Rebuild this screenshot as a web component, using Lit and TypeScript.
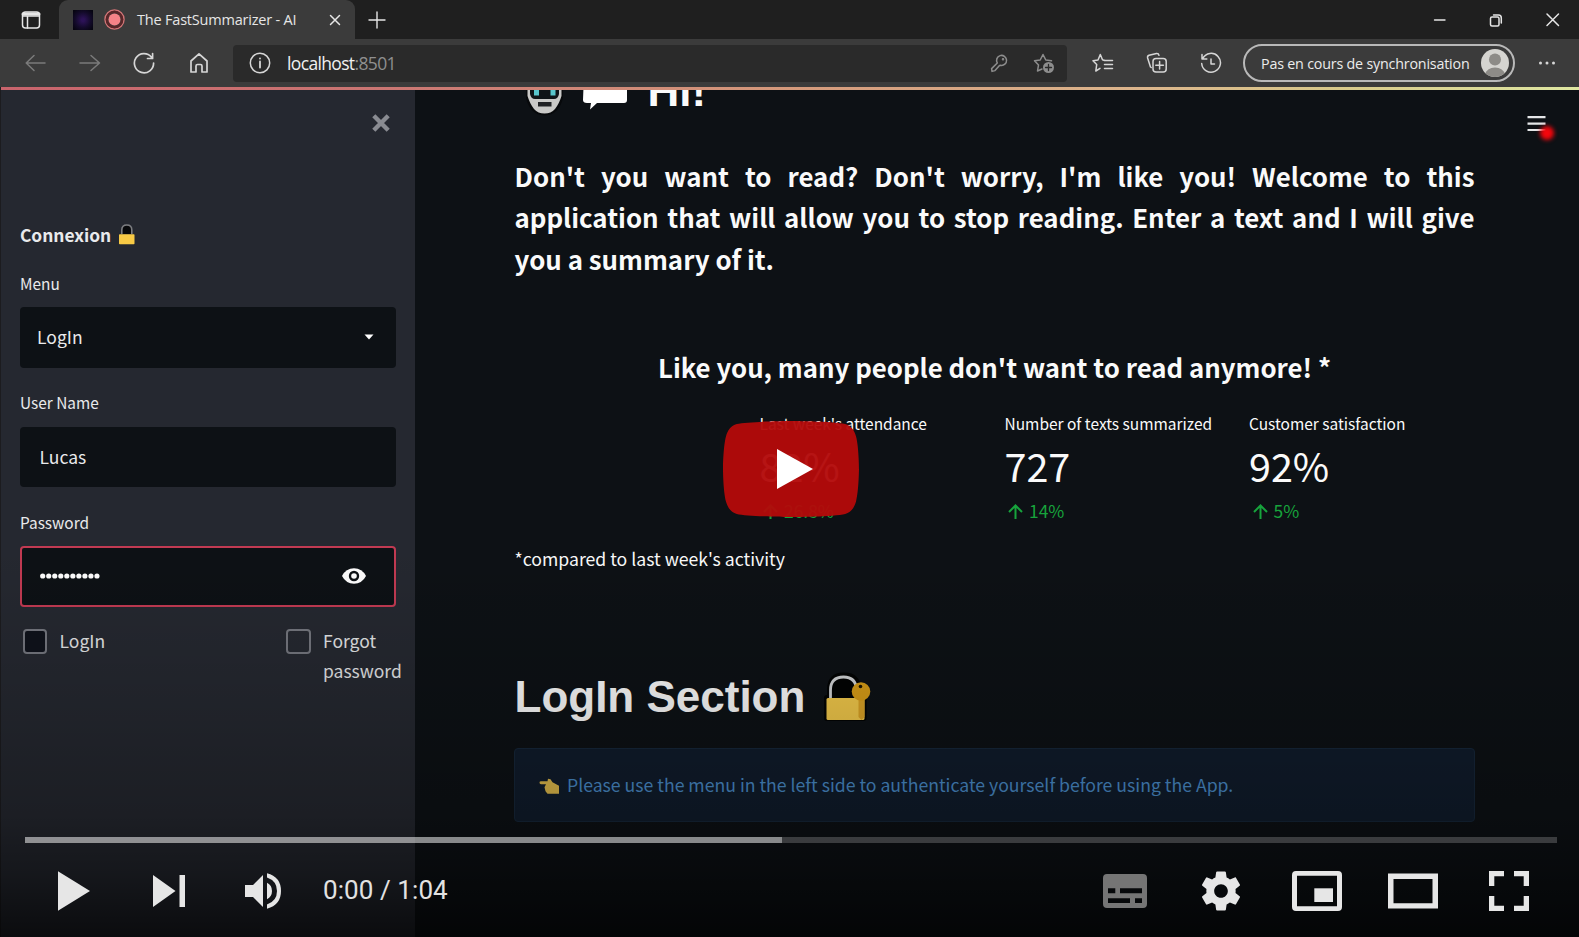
import { LitElement, html, css, svg } from "lit";
import { customElement } from "lit/decorators.js";

const metrics = [
  { label: "Last week's attendance", value: "82%", delta: "26.8%" },
  { label: "Number of texts summarized", value: "727", delta: "14%" },
  { label: "Customer satisfaction", value: "92%", delta: "5%" },
];

const icon = (w: number, h: number, body: unknown, cls = "") =>
  html`<svg class="ico ${cls}" width=${w} height=${h} viewBox="0 0 ${w} ${h}" fill="none" stroke="currentColor" stroke-width="1.5" stroke-linecap="round" stroke-linejoin="round">${body}</svg>`;

@customElement("browser-chrome")
class BrowserChrome extends LitElement {
  static styles = css`
    :host { display: block; font-family: "Open Sans", "Noto Sans", sans-serif; color: #e6e6e6; }
    .ico { display: block; flex: none; }
    .strip { display: flex; height: 39px; background: #1f1f1f; }
    .side { width: 59px; display: flex; align-items: center; justify-content: center; padding-left: 2px; box-sizing: border-box; }
    .tab { width: 296px; box-sizing: border-box; display: flex; align-items: center; padding-left: 14px; background: #3b3b3b; border-radius: 9px 9px 0 0; }
    .fav { width: 20px; height: 20px; background: radial-gradient(circle, #2c1257 10%, #130a2a 55%, #060410 90%); }
    .rec { margin-left: 11px; }
    .title { margin-left: 12px; font-size: 14.5px; letter-spacing: -0.2px; width: 192px; white-space: nowrap; }
    .plus { margin: 11px 0 0 13px; }
    .win { margin-left: auto; display: flex; align-items: center; gap: 42px; padding-right: 19px; }
    .bar { display: flex; height: 48px; background: #3b3b3b; align-items: center; color: #d6d6d6; }
    .nav { display: flex; width: 233px; box-sizing: border-box; padding-left: 24px; gap: 32.5px; align-items: center; }
    .off { color: #7b7b7b; }
    .addr { width: 834px; height: 37px; box-sizing: border-box; background: #2a2a2a; border-radius: 4px; display: flex; align-items: center; padding: 0 12px 0 16px; }
    .url { margin-left: 16px; font-size: 17.5px; letter-spacing: -0.65px; flex: 1; color: #f0f0f0; }
    .port { color: #8f8f8f; }
    .dim { color: #8d8d8d; }
    .key { margin-right: 25px; }
    .tools { display: flex; padding-left: 25px; gap: 32px; }
    .pill { margin-left: 21px; width: 272px; height: 38px; box-sizing: border-box; border: 2px solid #b9b9b9; border-radius: 19px; display: flex; align-items: center; justify-content: space-between; padding: 0 4px 0 16px; font-size: 14.3px; letter-spacing: -0.2px; white-space: nowrap; color: #ececec; }
    .more { margin-left: 22px; }
    .line { height: 3px; margin-left: 1px; background: linear-gradient(90deg, #c9646c 0%, #cb7773 25%, #d59a7c 50%, #dcb58c 72%, #d8c98a 85%, #dfe7a2 100%); }
  `;

  render() {
    return html`
      <div class="strip">
        <div class="side">${icon(20, 20, svg`<rect x="1.5" y="2" width="17" height="16" rx="3"/><path d="M2 4 H18" stroke-width="3"/><path d="M2 6 H18 M6.5 6 V18"/>`)}</div>
        <div class="tab">
          <div class="fav"></div>
          ${icon(21, 21, svg`<circle cx="10.5" cy="10.5" r="9.5" stroke="#d27476"/><circle cx="10.5" cy="10.5" r="7.7" stroke="#5a2528" stroke-width="2.4"/><circle cx="10.5" cy="10.5" r="6" fill="#f58287" stroke="none"/>`, "rec")}
          <span class="title">The FastSummarizer - AI</span>
          ${icon(12, 12, svg`<path d="M1.5 1.5 L10.5 10.5 M10.5 1.5 L1.5 10.5"/>`)}
        </div>
        ${icon(18, 18, svg`<path d="M9 1 V17 M1 9 H17" stroke-width="1.4"/>`, "plus")}
        <div class="win">
          ${icon(14, 14, svg`<path d="M1.5 7 H12" stroke-width="1.4"/>`)}
          ${icon(14, 14, svg`<rect x="1.5" y="4" width="8.5" height="9" rx="1.5"/><path d="M4.5 2 H9.5 Q12.3 2 12.3 5 V10"/>`)}
          ${icon(15, 15, svg`<path d="M2 2 L13.5 13.5 M13.5 2 L2 13.5"/>`)}
        </div>
      </div>
      <div class="bar">
        <div class="nav">
          ${icon(22, 20, svg`<path d="M10 2.5 L2.2 10 L10 17.5 M2.2 10 H21"/>`, "off")}
          ${icon(22, 20, svg`<path d="M12 2.5 L20.5 10 L12 17.5 M20.5 10 H1"/>`, "off")}
          ${icon(22, 22, svg`<path d="M18.5 5.2 A9.6 9.6 0 1 0 20.6 11 M19.6 1.5 V6.5 H14.5" stroke-width="1.7"/>`)}
          ${icon(22, 22, svg`<path d="M3 9 L11 1.8 L19 9 V20 H14 V14 Q14 12.5 12.5 12.5 H9.5 Q8 12.5 8 14 V20 H3 Z" stroke-width="1.7"/>`)}
        </div>
        <div class="addr">
          ${icon(22, 22, svg`<circle cx="11" cy="11" r="9.7"/><path d="M11 9.5 V15.5 M11 6.4 V6.6" stroke-width="1.8"/>`)}
          <span class="url">localhost<span class="port">:8501</span></span>
          ${icon(18, 20, svg`<path d="M7.3 10 A5 5 0 1 1 10.6 12.3 L9.5 12.4 L5 17.6 L2 18.4 L1.6 15.6 Z"/><circle cx="13" cy="6.3" r="0.5"/>`, "dim key")}
          ${icon(22, 22, svg`<path d="M9 17 L4.5 19 L5.5 13 L1.5 8.8 L7.2 8 L10 2.5 L12.8 8 L18.5 8.8"/><circle cx="15.5" cy="15.5" r="5.5" fill="currentColor" stroke="none"/><path d="M15.5 12.5 V18.5 M12.5 15.5 H18.5" stroke="#2a2a2a" stroke-width="1.3"/>`, "dim")}
        </div>
        <div class="tools">
          ${icon(22, 22, svg`<path d="M12.5 8.5 L10.5 7.8 L8.3 2.5 L6 8 L1 8.8 L4.7 12.6 L3.8 19 L8 16.3 M12.8 8.5 H20.5 M12.5 12.5 H20.5 M12.5 16.5 H20.5"/>`)}
          ${icon(22, 22, svg`<rect x="7" y="6.5" width="13.2" height="13.5" rx="3"/><path d="M13.6 9.5 V17 M9.8 13.2 H17.4 M5.2 15.5 L4.5 15 L1.6 6 Q1.2 4 3 3.3 L10.5 1.6 Q12.6 1.4 13 3.3"/>`)}
          ${icon(22, 22, svg`<path d="M2.8 6.3 A9.4 9.4 0 1 1 1.7 11.5 M2 2.5 V7 H6.8 M11 7 V12 H14.5"/>`)}
        </div>
        <div class="pill">
          <span>Pas en cours de synchronisation</span>
          <svg class="ico" width="28" height="28" viewBox="0 0 28 28"><defs><clipPath id="av"><circle cx="14" cy="14" r="14"/></clipPath></defs><g clip-path="url(#av)"><rect width="28" height="28" fill="#d5d4d0"/><circle cx="14" cy="10.5" r="6" fill="#8d8b87"/><ellipse cx="14" cy="25" rx="9.5" ry="6.5" fill="#8d8b87"/></g></svg>
        </div>
        ${icon(20, 6, svg`<g fill="currentColor" stroke="none"><circle cx="3.5" cy="3" r="1.5"/><circle cx="10" cy="3" r="1.5"/><circle cx="16.5" cy="3" r="1.5"/></g>`, "more")}
      </div>
      <div class="line"></div>
    `;
  }
}

@customElement("side-panel")
class SidePanel extends LitElement {
  static styles = css`
    :host { display: block; width: 415px; flex: none; box-sizing: border-box; border-left: 1px solid #1c1c1f; padding: 0 19px 0 19px; background: #252830; color: #e9eaec; font-family: "Noto Sans CJK JP", sans-serif; }
    .close { display: flex; justify-content: flex-end; height: 65px; align-items: center; padding-right: 6.5px; }
    .head { display: flex; align-items: center; gap: 7px; margin-top: 67.5px; height: 24px; line-height: 24px; font-size: 17.4px; font-weight: 700; letter-spacing: -0.05px; }
    .fields { display: grid; gap: 23.5px; margin-top: 25px; }
    .label { height: 22px; line-height: 22px; font-size: 15.4px; margin-bottom: 13.5px; }
    .box { width: 375.5px; height: 60.5px; box-sizing: border-box; border-radius: 4px; background: #0d1115; display: flex; align-items: center; justify-content: space-between; font-size: 17.5px; line-height: 24px; padding: 0 22px 0 17px; }
    .text { padding-left: 19.5px; }
    .active { border: 2px solid #c23a52; padding: 0 28px 0 17px; }
    .checks { display: grid; grid-template-columns: 263.5px 1fr; margin-top: 19.5px; font-size: 17.5px; line-height: 29.5px; color: #e2e3e5; }
    .check { display: flex; gap: 12.5px; padding-left: 2.5px; }
    .sq { width: 24.5px; height: 24.5px; flex: none; box-sizing: border-box; border: 2px solid #74767e; border-radius: 4px; margin-top: 3px; }
    .dark { background: #0f121b; }
  `;

  render() {
    return html`
      <div class="close"><svg width="18" height="18" viewBox="0 0 18 18" stroke="#898b91" stroke-width="4.4"><path d="M1.8 1.8 L16.2 16.2 M16.2 1.8 L1.8 16.2"/></svg></div>
      <div class="head"><span>Connexion</span>
        <svg width="18" height="23" viewBox="0 0 18 23"><path d="M3.8 11 V7 Q3.8 2 8.8 2 Q13.8 2 13.8 7 V11" fill="#08090b" stroke="#7c7d80" stroke-width="1.6"/><rect x="1" y="11.2" width="15.5" height="10" rx="0.8" fill="#f8ca45"/></svg>
      </div>
      <div class="fields">
        <div><div class="label">Menu</div><div class="box"><span>LogIn</span><svg width="10" height="6" viewBox="0 0 10 6"><path d="M0.5 0.5 H9.5 L5 5.5 Z" fill="#fff"/></svg></div></div>
        <div><div class="label">User Name</div><div class="box text">Lucas</div></div>
        <div><div class="label">Password</div><div class="box active">
          <svg width="62" height="8" viewBox="0 0 62 8">${Array.from({ length: 10 }, (_, i) => svg`<circle cx=${3.7 + i * 6.03} cy="4" r="2.6" fill="#fff"/>`)}</svg>
          <svg width="24" height="16" viewBox="0 0 24 16"><path d="M0 8 Q4 0.3 12 0.3 Q20 0.3 24 8 Q20 15.7 12 15.7 Q4 15.7 0 8 Z" fill="#fff"/><circle cx="12" cy="8" r="5.2" fill="#0d1115"/><circle cx="12" cy="8" r="2.8" fill="#fff"/></svg>
        </div></div>
      </div>
      <div class="checks">
        <div class="check"><span class="sq dark"></span><span>LogIn</span></div>
        <div class="check"><span class="sq"></span><span>Forgot password</span></div>
      </div>
    `;
  }
}

@customElement("summary-page")
class SummaryPage extends LitElement {
  static styles = css`
    :host { display: block; flex: 1; min-width: 0; overflow: hidden; position: relative; box-sizing: border-box; padding: 0 104.5px 0 99.5px; background: #0d1115; color: #fafafa; font-family: "Noto Sans CJK JP", sans-serif; }
    .hi, .login { display: flex; align-items: center; height: 53px; line-height: 53px; font-family: "Liberation Sans", sans-serif; font-weight: 700; font-size: 44px; white-space: nowrap; }
    .hi { margin-top: -26px; padding-left: 11px; }
    .hi span { margin-left: 20px; }
    .bubble { margin-left: 18px; }
    .intro { margin: 38px 0 0; height: 124px; line-height: 41.4px; font-size: 25.85px; font-weight: 600; text-align: justify; }
    .like { margin-top: 67px; line-height: 41px; height: 41px; font-size: 25.8px; font-weight: 600; text-align: center; white-space: nowrap; }
    .metrics { display: grid; grid-template-columns: 245px 244.5px 226px; padding-left: 245px; margin-top: 24.5px; }
    .label { height: 22px; line-height: 22px; font-size: 15.47px; white-space: nowrap; }
    .value { margin-top: 6px; height: 50px; line-height: 50px; font-size: 39.5px; font-weight: 400; }
    .delta { margin-top: 9.5px; height: 24px; line-height: 24px; font-size: 17.4px; color: #17a33c; display: flex; align-items: center; gap: 6px; padding-left: 3.5px; }
    .note { margin-top: 24px; height: 24px; line-height: 24px; font-size: 17.65px; }
    .login { margin-top: 99px; }
    .login svg { margin-left: 19px; }
    .info { margin: 24.5px 0 0 -0.5px; height: 74px; box-sizing: border-box; border: 1px solid #16273a; border-radius: 4px; background: #101c2c; display: flex; align-items: center; gap: 7px; padding-left: 24px; font-size: 17.65px; line-height: 24px; color: #4a8dcb; white-space: nowrap; }
    .burger { position: absolute; right: 25px; top: 25px; }
    .spot { position: absolute; right: 25px; top: 36px; width: 14px; height: 14px; border-radius: 50%; background: #f5060c; filter: blur(2px); }
  `;

  render() {
    return html`
      <svg class="burger" width="28" height="18" viewBox="0 0 28 18" stroke="#e4e6e8" stroke-width="2.2"><path d="M1.5 2.2 H19.5 M1.5 8.6 H19.5 M1.5 15 H19.5"/></svg>
      <div class="spot"></div>
      <div class="hi">
        <svg width="38" height="50" viewBox="0 0 38 50"><path d="M0 10 H37 V32 Q33 49 18.5 49.5 Q4 49 0 32 Z" fill="#07090b"/><path d="M1.5 10 H35.5 V30 Q33 38 29 43 Q25 47.5 18.5 47.5 Q12 47.5 8 43 Q4 38 1.5 30 Z" fill="#c9c9c7"/><path d="M4 10 H33 V28 Q32 33 28 33 H9 Q5 33 4 28 Z" fill="#0f1417"/><rect x="8" y="22" width="5" height="7.5" fill="#58c6cc"/><rect x="24.5" y="22" width="5" height="7.5" fill="#58c6cc"/><rect x="12" y="36" width="13.5" height="4.5" fill="#202224"/></svg>
        <svg class="bubble" width="46" height="50" viewBox="0 0 46 50"><path d="M2 8 H42 Q45 8 45 10 V34 Q45 37 42 37 H15 L8 43.5 L9 37 H5 Q1 37 1 34 Z" fill="#fff"/></svg>
        <span>Hi!</span>
      </div>
      <p class="intro">Don't you want to read? Don't worry, I'm like you! Welcome to this application that will allow you to stop reading. Enter a text and I will give you a summary of it.</p>
      <div class="like">Like you, many people don't want to read anymore! *</div>
      <div class="metrics">
        ${metrics.map((m) => html`<div>
          <div class="label">${m.label}</div>
          <div class="value">${m.value}</div>
          <div class="delta"><svg width="15" height="15" viewBox="0 0 15 15" fill="none" stroke="currentColor" stroke-width="2"><path d="M7.5 15 V1.5 M1 8 L7.5 1.5 L14 8"/></svg>${m.delta}</div>
        </div>`)}
      </div>
      <div class="note">*compared to last week's activity</div>
      <div class="login"><span>LogIn Section</span>
        <svg width="48" height="50" viewBox="0 0 48 50"><path d="M6 26 V18 Q6 3.5 20 3.5 Q34 3.5 34 18 V26" fill="#020303" stroke="#020303" stroke-width="6"/><rect x="0" y="23" width="42.5" height="26" rx="3" fill="#020303"/><path d="M6.5 26 V18 Q6.5 5 19.5 5 Q32 5 32.5 18 V26" fill="none" stroke="#d0d2d4" stroke-width="2.8"/><rect x="2.5" y="26" width="38" height="22" rx="1.5" fill="#f1c84a"/><path d="M34.5 19 H40.5 V45 L37.5 48 L34.5 45 Z" fill="#d9a125"/><circle cx="37" cy="19.5" r="9.3" fill="#d79c17"/><circle cx="36.5" cy="14.5" r="1.8" fill="#1d1503"/></svg>
      </div>
      <div class="info">
        <svg width="21" height="18" viewBox="0 0 21 18"><path d="M0.5 5.2 Q0.5 4 2 4 H8.5 L9 1.6 L11.5 2 L13.5 5 L20 8.5 V16.5 H8.5 L6.5 14 L5.5 10 L7 7 H2 Q0.5 6.8 0.5 5.2 Z" transform="translate(0 1.2)" fill="#e3bd4c"/></svg>
        <span>Please use the menu in the left side to authenticate yourself before using the App.</span>
      </div>
    `;
  }
}

@customElement("player-overlay")
class PlayerOverlay extends LitElement {
  static styles = css`
    :host { position: absolute; inset: 0; display: flex; flex-direction: column; justify-content: flex-end; background: linear-gradient(180deg, rgba(0,0,0,0) 58%, rgba(0,0,0,0.07) 68%, rgba(0,0,0,0.13) 75%, rgba(0,0,0,0.25) 87%, rgba(0,0,0,0.42) 93%, rgba(0,0,0,0.7) 100%); }
    .big { position: absolute; left: 723px; top: 421px; }
    .track { margin: 0 22px 0 25px; height: 6px; background: rgba(255,255,255,0.2); }
    .loaded { height: 6px; width: 49.4%; background: rgba(255,255,255,0.4); }
    .row { height: 94px; display: flex; align-items: center; justify-content: space-between; padding: 0 50px 0 58px; }
    .group { display: flex; align-items: center; height: 40px; padding-top: 1px; }
    .row svg { display: block; fill: #e6e6e6; }
    .next { margin-left: 63px; }
    .vol { margin-left: 60px; }
    .time { margin-left: 42px; font: 26px/40px Roboto, sans-serif; letter-spacing: 0.08px; color: #e2e2e2; white-space: nowrap; padding-bottom: 1px; }
    .row .cc { fill: #757575; }
    .gear { margin-left: 55px; }
    .mini { margin-left: 52px; }
    .wide { margin-left: 46px; }
    .full { margin-left: 51px; }
  `;

  render() {
    return html`
      <svg class="big" width="136" height="96" viewBox="0 0 68 48"><path fill="#b30a0a" fill-opacity="0.96" d="M66.52 7.74c-.78-2.93-2.49-5.41-5.42-6.19C55.79.13 34 0 34 0S12.21.13 6.9 1.55C3.97 2.33 2.27 4.81 1.48 7.74.06 13.05 0 24 0 24s.06 10.95 1.48 16.26c.78 2.93 2.49 5.41 5.42 6.19C12.21 47.87 34 48 34 48s21.79-.13 27.1-1.55c2.93-.78 4.64-3.26 5.42-6.19C67.94 34.95 68 24 68 24s-.06-10.95-1.48-16.26z"/><path fill="#fff" d="M45 24 27 14v20z"/></svg>
      <div class="track"><div class="loaded"></div></div>
      <div class="row">
        <div class="group">
          <svg width="32" height="40" viewBox="0 0 32 40"><path d="M0 0.3 L32 20 L0 39.7 Z"/></svg>
          <svg class="next" width="32" height="32" viewBox="0 0 32 32"><path d="M0 0 L22.5 16 L0 32 Z M26.5 0 H32 V32 H26.5 Z"/></svg>
          <svg class="vol" width="36" height="36" viewBox="0 0 36 36"><path d="M0 12 H8 L18 2 V34 L8 24 H0 Z M22 9.7 Q27 12.3 27 18 Q27 23.5 22 26.2 Z M22 0.3 Q36 4 36 18 Q36 32 22 35.7 V31.5 Q32 28 32 18 Q32 8 22 4.5 Z"/></svg>
          <span class="time">0:00 / 1:04</span>
        </div>
        <div class="group">
          <svg class="cc" width="44" height="34" viewBox="0 0 44 34"><path fill-rule="evenodd" d="M4 0 H40 Q44 0 44 4 V30 Q44 34 40 34 H4 Q0 34 0 30 V4 Q0 0 4 0 Z M5 14.3 V19.3 H12.3 V14.3 Z M17 14.3 V19.3 H39 V14.3 Z M5 24.3 V29 H27 V24.3 Z M32 24.3 V29 H39 V24.3 Z"/></svg>
          <svg class="gear" width="38" height="40" viewBox="2.27 2 19.46 20"><path d="M19.43 12.98c.04-.32.07-.64.07-.98s-.03-.66-.07-.98l2.11-1.65c.19-.15.24-.42.12-.64l-2-3.46c-.12-.22-.39-.3-.61-.22l-2.49 1c-.52-.4-1.08-.73-1.69-.98l-.38-2.65C14.46 2.18 14.25 2 14 2h-4c-.25 0-.46.18-.49.42l-.38 2.65c-.61.25-1.17.59-1.69.98l-2.49-1c-.23-.09-.49 0-.61.22l-2 3.46c-.13.22-.07.49.12.64l2.11 1.65c-.04.32-.07.65-.07.98s.03.66.07.98l-2.11 1.65c-.19.15-.24.42-.12.64l2 3.46c.12.22.39.3.61.22l2.49-1c.52.4 1.08.73 1.69.98l.38 2.65c.03.24.24.42.49.42h4c.25 0 .46-.18.49-.42l.38-2.65c.61-.25 1.17-.59 1.69-.98l2.49 1c.23.09.49 0 .61-.22l2-3.46c.12-.22.07-.49-.12-.64l-2.11-1.65zM12 15.5c-1.93 0-3.5-1.57-3.5-3.5s1.57-3.5 3.5-3.5 3.5 1.57 3.5 3.5-1.57 3.5-3.5 3.5z"/></svg>
          <svg class="mini" width="50" height="40" viewBox="0 0 50 40"><path fill-rule="evenodd" d="M4 0 H46 Q50 0 50 4 V36 Q50 40 46 40 H4 Q0 40 0 36 V4 Q0 0 4 0 Z M5 4.7 V35.3 H45 V4.7 Z"/><path d="M22.3 17.3 H41 V31 H22.3 Z"/></svg>
          <svg class="wide" width="50" height="36" viewBox="0 0 50 36"><path fill-rule="evenodd" d="M0 0.5 H50 V35.5 H0 Z M5.5 6 V30.3 H44.5 V6 Z"/></svg>
          <svg class="full" width="40" height="40" viewBox="0 0 40 40"><path d="M0 0 H15 V5.3 H5.3 V15 H0 Z M25 0 H40 V15 H34.7 V5.3 H25 Z M0 25 H5.3 V34.7 H15 V40 H0 Z M34.7 25 H40 V40 H25 V34.7 H34.7 Z"/></svg>
        </div>
      </div>
    `;
  }
}

@customElement("app-root")
class AppRoot extends LitElement {
  static styles = css`
    :host { display: flex; flex-direction: column; position: relative; width: 1579px; height: 937px; overflow: hidden; background: #1f1f1f; }
    .content { display: flex; flex: 1; min-height: 0; }
  `;

  render() {
    return html`
      <browser-chrome></browser-chrome>
      <div class="content"><side-panel></side-panel><summary-page></summary-page></div>
      <player-overlay></player-overlay>
    `;
  }
}
